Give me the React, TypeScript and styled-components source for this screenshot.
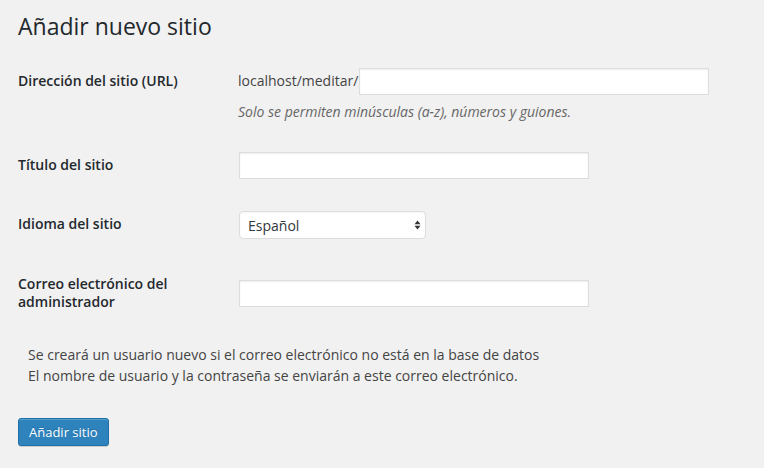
import React from "react";
import styled, { createGlobalStyle } from "styled-components";

const GlobalStyle = createGlobalStyle`
  html, body {
    margin: 0;
    padding: 0;
    background: #f1f1f1;
  }
  body {
    font-family: "Open Sans", "Liberation Sans", sans-serif;
    font-size: 14px;
    color: #444;
    -webkit-font-smoothing: antialiased;
  }
  * { box-sizing: border-box; }
`;

const Page = styled.div`
  padding: 3px 20px 20px 18px;
  min-height: 468px;
`;

const Title = styled.h1`
  margin: 0;
  padding: 9px 15px 4px 0;
  font-size: 23px;
  font-weight: 400;
  line-height: 29px;
  color: #23282d;
`;

const FormTable = styled.div`
  margin-top: 7px;
  display: flex;
  flex-direction: column;
`;

const Row = styled.div`
  display: flex;
  align-items: stretch;
`;

const Label = styled.label`
  flex: 0 0 210px;
  padding: 20px 10px 20px 0;
  font-weight: 600;
  line-height: 1.3;
  color: #23282d;
`;

const Field = styled.div`
  padding: 15px 10px;
  display: flex;
  flex-direction: column;
  justify-content: center;
  line-height: 1.3;
`;

const Inline = styled.div`
  display: flex;
  align-items: center;
`;

const Prefix = styled.span`
  color: #444;
  font-size: 14px;
`;

const TextInput = styled.input`
  width: 350px;
  height: 27px;
  margin: 1px;
  padding: 3px 5px;
  border: 1px solid #ddd;
  background: #fff;
  box-shadow: inset 0 1px 2px rgba(0, 0, 0, 0.07);
  font-family: inherit;
  font-size: 14px;
  color: #32373c;
  outline: none;
`;

const Description = styled.p`
  margin: 7px 0 0;
  font-size: 14px;
  font-style: italic;
  line-height: 18px;
  color: #666;
`;

const SelectWrap = styled.div`
  position: relative;
  width: 187px;
  margin: 1px;
`;

const Select = styled.select`
  appearance: none;
  -webkit-appearance: none;
  width: 100%;
  height: 28px;
  padding: 2px 20px 2px 8px;
  border: 1px solid #ddd;
  border-radius: 4px;
  background: #fff;
  box-shadow: inset 0 1px 2px rgba(0, 0, 0, 0.04);
  font-family: inherit;
  font-size: 14px;
  color: #32373c;
  outline: none;
`;

const Arrows = styled.svg`
  position: absolute;
  right: 5px;
  top: 9px;
  pointer-events: none;
`;

const Note = styled.div`
  padding: 13px 10px 15px;
  line-height: 21px;
  color: #444;
`;

const Submit = styled.div`
  padding: 17px 0 10px;
`;

const PrimaryButton = styled.button`
  height: 28px;
  padding: 0 10px 1px;
  border: 1px solid #1f6ea5;
  border-radius: 3px;
  background: #2f83bd;
  box-shadow: inset 0 1px 0 rgba(120, 190, 230, 0.5), 0 1px 0 rgba(0, 0, 0, 0.15);
  color: #fff;
  font-family: inherit;
  font-size: 13px;
  line-height: 26px;
  text-shadow: 0 -1px 1px #1f6ea5;
  cursor: pointer;
`;

export default function App() {
  return (
    <>
      <GlobalStyle />
      <Page>
        <Title>Añadir nuevo sitio</Title>
        <FormTable>
          <Row>
            <Label htmlFor="site-address">Dirección del sitio (URL)</Label>
            <Field>
              <Inline>
                <Prefix>localhost/meditar/</Prefix>
                <TextInput id="site-address" type="text" />
              </Inline>
              <Description>
                Solo se permiten minúsculas (a-z), números y guiones.
              </Description>
            </Field>
          </Row>
          <Row>
            <Label htmlFor="site-title">Título del sitio</Label>
            <Field>
              <TextInput id="site-title" type="text" />
            </Field>
          </Row>
          <Row>
            <Label htmlFor="site-language">Idioma del sitio</Label>
            <Field>
              <SelectWrap>
                <Select id="site-language" defaultValue="es_ES">
                  <option value="es_ES">Español</option>
                  <option value="en_US">English (United States)</option>
                </Select>
                <Arrows width="7" height="10" viewBox="0 0 7 10">
                  <path d="M3.5 0.5 L6.5 4.2 L0.5 4.2 Z" fill="#333" />
                  <path d="M3.5 9.5 L6.5 5.8 L0.5 5.8 Z" fill="#333" />
                </Arrows>
              </SelectWrap>
            </Field>
          </Row>
          <Row>
            <Label htmlFor="admin-email">
              Correo electrónico del
              <br />
              administrador
            </Label>
            <Field>
              <TextInput id="admin-email" type="email" />
            </Field>
          </Row>
          <Row>
            <Note>
              Se creará un usuario nuevo si el correo electrónico no está en la base de datos
              <br />
              El nombre de usuario y la contraseña se enviarán a este correo electrónico.
            </Note>
          </Row>
        </FormTable>
        <Submit>
          <PrimaryButton type="submit">Añadir sitio</PrimaryButton>
        </Submit>
      </Page>
    </>
  );
}
